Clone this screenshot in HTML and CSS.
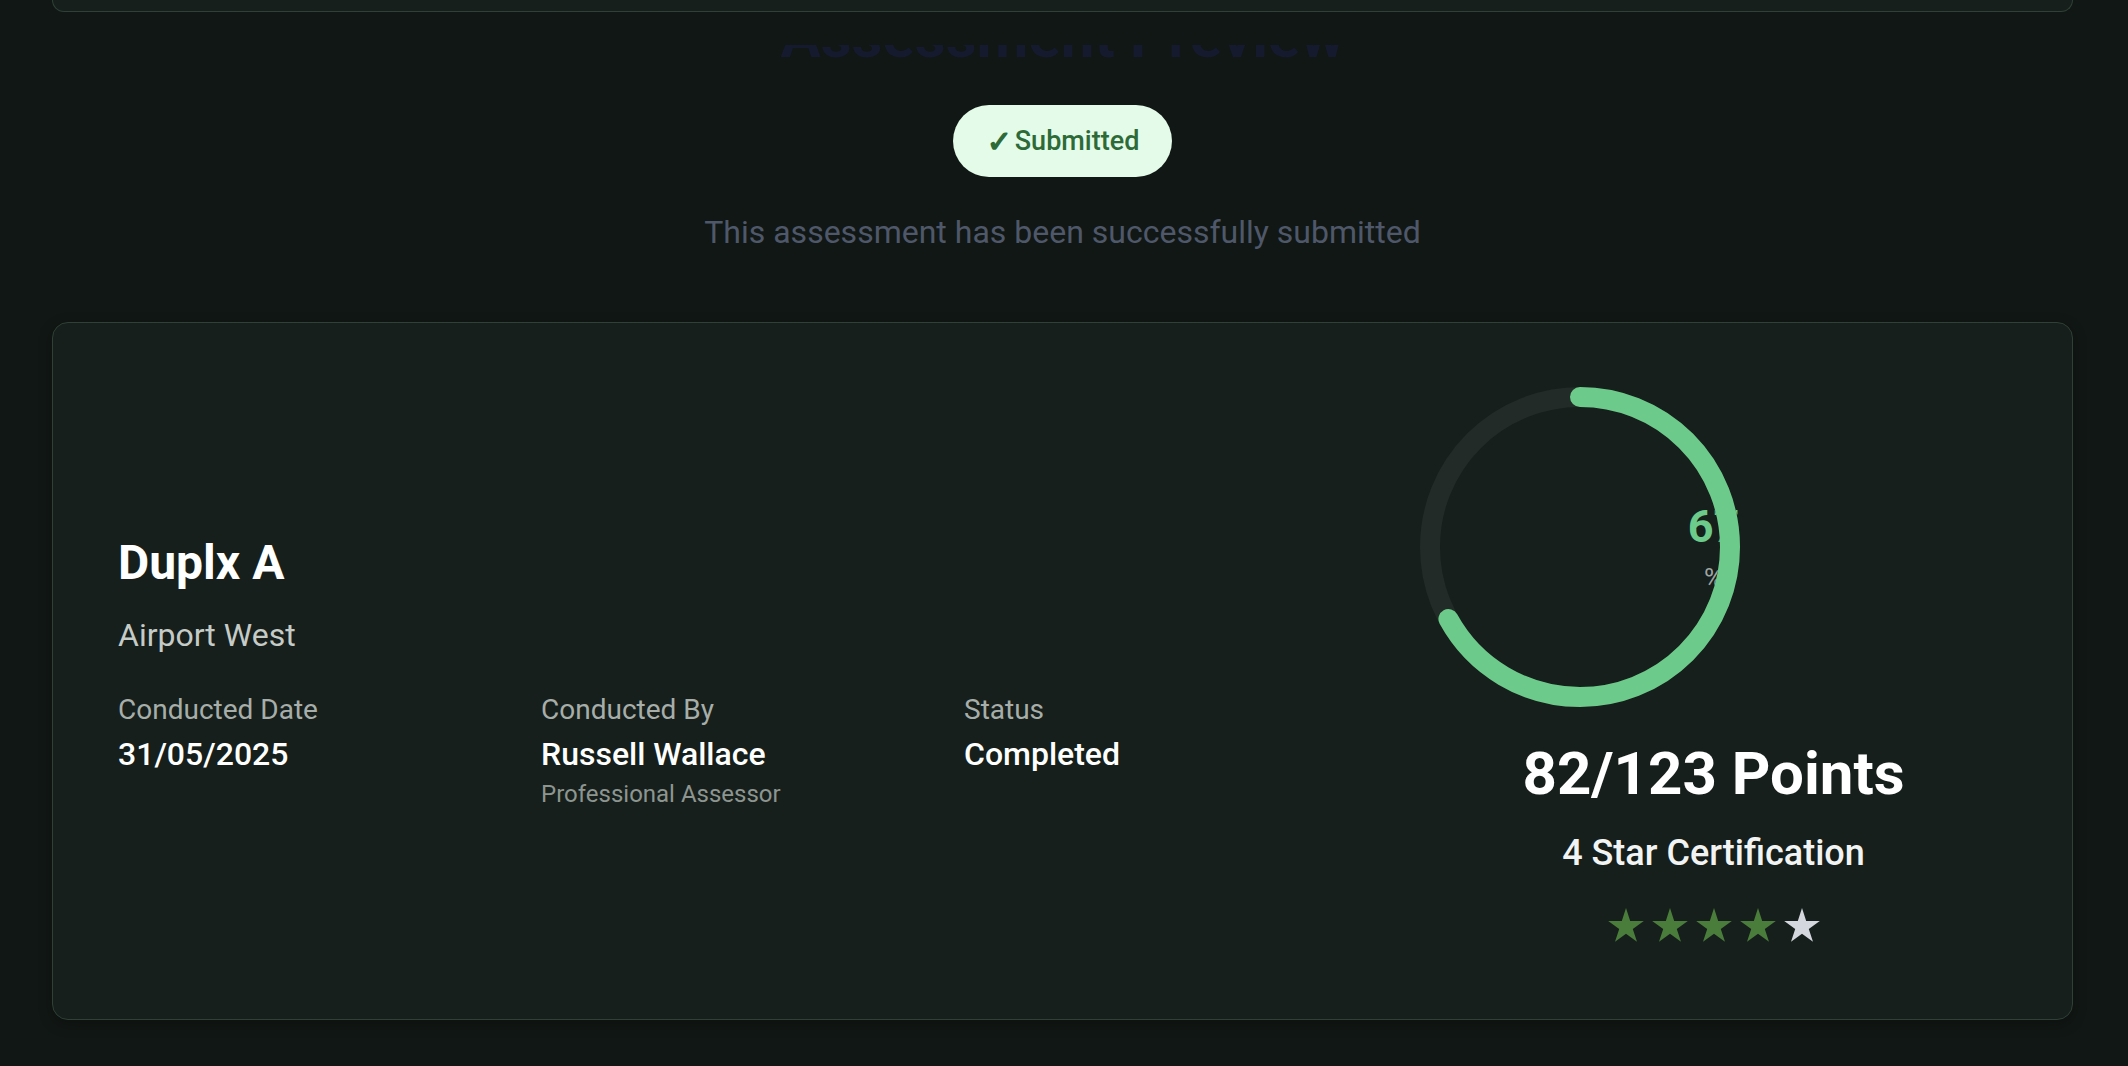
FILE: index.html
```html
<!DOCTYPE html>
<html lang="en">
<head>
<meta charset="utf-8">
<title>Assessment Preview</title>
<link rel="stylesheet" href="styles.css">
</head>
<body>
<div class="page">
  <div class="top-card"></div>
  <h1 class="page-title">Assessment Preview</h1>
  <div class="status-row"><span class="pill"><span class="check">✓</span>Submitted</span></div>
  <p class="subtitle">This assessment has been successfully submitted</p>

  <section class="card">
    <div class="details">
      <h2 class="name">Duplx A</h2>
      <div class="location">Airport West</div>
      <div class="info-grid">
        <div class="info">
          <div class="label">Conducted Date</div>
          <div class="value">31/05/2025</div>
        </div>
        <div class="info">
          <div class="label">Conducted By</div>
          <div class="value">Russell Wallace</div>
          <div class="sub">Professional Assessor</div>
        </div>
        <div class="info">
          <div class="label">Status</div>
          <div class="value">Completed</div>
        </div>
      </div>
    </div>

    <div class="score">
      <div class="ring-wrap">
        <div class="ring-text">
          <span class="pct">67</span>
          <span class="pct-sign">%</span>
        </div>
        <svg class="ring" width="320" height="320" viewBox="0 0 320 320">
          <circle cx="160" cy="160" r="150" fill="none" stroke="#222b27" stroke-width="20"/>
          <circle cx="160" cy="160" r="150" fill="none" stroke="#6ccb8a" stroke-width="20" stroke-linecap="round" stroke-dasharray="631.46 942.48" transform="rotate(-90 160 160)"/>
        </svg>
      </div>
      <div class="points">82/123 Points</div>
      <div class="cert">4 Star Certification</div>
      <div class="stars">
        <svg class="star on" viewBox="1.5 1.5 21 20" width="36" height="34"><polygon points="12,1.5 14.47,9.1 22.46,9.1 15.99,13.8 18.47,21.4 12,16.7 5.53,21.4 8.01,13.8 1.54,9.1 9.53,9.1"/></svg>
        <svg class="star on" viewBox="1.5 1.5 21 20" width="36" height="34"><polygon points="12,1.5 14.47,9.1 22.46,9.1 15.99,13.8 18.47,21.4 12,16.7 5.53,21.4 8.01,13.8 1.54,9.1 9.53,9.1"/></svg>
        <svg class="star on" viewBox="1.5 1.5 21 20" width="36" height="34"><polygon points="12,1.5 14.47,9.1 22.46,9.1 15.99,13.8 18.47,21.4 12,16.7 5.53,21.4 8.01,13.8 1.54,9.1 9.53,9.1"/></svg>
        <svg class="star on" viewBox="1.5 1.5 21 20" width="36" height="34"><polygon points="12,1.5 14.47,9.1 22.46,9.1 15.99,13.8 18.47,21.4 12,16.7 5.53,21.4 8.01,13.8 1.54,9.1 9.53,9.1"/></svg>
        <svg class="star off" viewBox="1.5 1.5 21 20" width="36" height="34"><polygon points="12,1.5 14.47,9.1 22.46,9.1 15.99,13.8 18.47,21.4 12,16.7 5.53,21.4 8.01,13.8 1.54,9.1 9.53,9.1"/></svg>
      </div>
    </div>
  </section>
</div>
</body>
</html>
```

FILE: styles.css
```css
* { box-sizing: border-box; }

html, body {
  margin: 0;
  padding: 0;
  background: #111714;
  font-family: Roboto, "Noto Sans", "Liberation Sans", sans-serif;
  overflow: hidden;
}

.page {
  padding: 0 55px 0 52px;
  height: 1066px;
}

.top-card {
  height: 12px;
  background: #161f1b;
  border: 1px solid #2e4037;
  border-top: none;
  border-radius: 0 0 16px 16px;
}

.page-title {
  margin: 0;
  text-align: center;
  font-size: 60px;
  line-height: 50px;
  font-weight: 700;
  color: #161a2e;
  clip-path: inset(33px 0 0 0);
}

.status-row {
  margin-top: 43px;
  display: flex;
  justify-content: center;
}

.pill {
  display: inline-flex;
  align-items: center;
  height: 72px;
  padding: 0 33px 0 34px;
  border-radius: 36px;
  background: #e3fbe8;
  color: #2e6a38;
  font-size: 27px;
  font-weight: 500;
}

.check {
  font-family: "DejaVu Sans", sans-serif;
  font-size: 30px;
  font-weight: 700;
  -webkit-text-stroke: 1.4px currentColor;
  margin-right: 3px;
}

.subtitle {
  margin: 37px 0 0;
  text-align: center;
  font-size: 32px;
  line-height: 37.5px;
  color: #4f586a;
}

.card {
  margin-top: 70px;
  height: 698px;
  background: #161f1b;
  border: 1px solid #2e4037;
  border-radius: 16px;
  padding: 0 65px;
  display: flex;
  align-items: center;
  box-shadow: 0 4px 14px rgba(0, 0, 0, 0.25);
}

.details {
  flex: 1;
  padding-top: 2px;
}

.name {
  margin: 0;
  font-size: 48px;
  line-height: 56px;
  font-weight: 700;
  color: #ffffff;
}

.location {
  margin-top: 25px;
  font-size: 32px;
  line-height: 38px;
  color: #c5cbc7;
}

.info-grid {
  margin-top: 39px;
  display: grid;
  grid-template-columns: repeat(3, 423px);
}

.label {
  font-size: 28px;
  line-height: 33px;
  color: #a7aeaa;
}

.value {
  margin-top: 9px;
  font-size: 32px;
  line-height: 38px;
  font-weight: 500;
  color: #ffffff;
}

.sub {
  margin-top: 7px;
  font-size: 24px;
  line-height: 28px;
  color: #8d9590;
}

.score {
  width: 587px;
  display: flex;
  flex-direction: column;
  align-items: center;
  padding-bottom: 12px;
}

.ring-wrap {
  position: relative;
  width: 100%;
  height: 320px;
}

.ring {
  position: relative;
  display: block;
}

.ring-text {
  position: absolute;
  inset: 0;
  display: flex;
  flex-direction: column;
  align-items: center;
  justify-content: center;
}

.pct {
  font-size: 45px;
  line-height: 52px;
  font-weight: 700;
  color: #6ccb8a;
}

.pct-sign {
  margin-top: 10px;
  font-size: 26px;
  line-height: 30px;
  color: #a0a7a3;
}

.points {
  margin-top: 32px;
  font-size: 60px;
  line-height: 70px;
  font-weight: 700;
  color: #ffffff;
}

.cert {
  margin-top: 23px;
  font-size: 36px;
  line-height: 42px;
  font-weight: 500;
  color: #f2f4f3;
}

.stars {
  margin-top: 34px;
  display: flex;
  gap: 8px;
}

.star { display: block; }
.star.on { fill: #4a7d3b; }
.star.off { fill: #d4d7de; }
```
